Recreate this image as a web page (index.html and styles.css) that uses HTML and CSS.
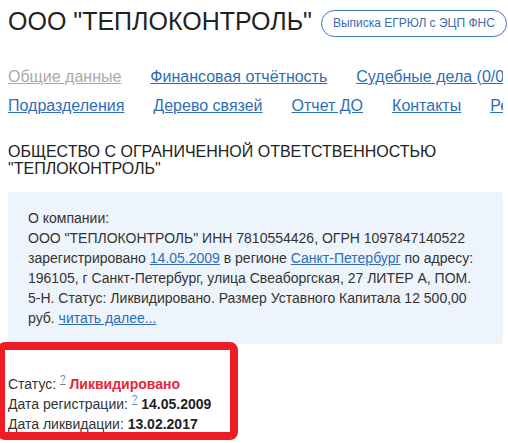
FILE: index.html
```html
<!DOCTYPE html>
<html lang="ru">
<head>
  <meta charset="UTF-8" />
  <meta name="viewport" content="width=device-width, initial-scale=1.0" />
  <title>ООО "ТЕПЛОКОНТРОЛЬ"</title>
  <link rel="stylesheet" href="styles.css">
</head>
<body>
  <div class="page">
    <!-- шапка с названием и кнопкой выписки -->
    <header class="head">
      <h1 class="title">ООО "ТЕПЛОКОНТРОЛЬ"</h1>
      <a href="#" class="pill">Выписка ЕГРЮЛ с ЭЦП ФНС</a>
    </header>

    <nav class="tabs">
      <div class="tabs-row">
        <a href="#" class="tab tab-current">Общие данные</a>
        <a href="#" class="tab">Финансовая отчётность</a>
        <a href="#" class="tab">Судебные дела (0/0)</a>
      </div>
      <div class="tabs-row">
        <a href="#" class="tab">Подразделения</a>
        <a href="#" class="tab">Дерево связей</a>
        <a href="#" class="tab">Отчет ДО</a>
        <a href="#" class="tab">Контакты</a>
        <a href="#" class="tab">Реквизиты</a>
      </div>
    </nav>

    <h2 class="full-name">ОБЩЕСТВО С ОГРАНИЧЕННОЙ ОТВЕТСТВЕННОСТЬЮ "ТЕПЛОКОНТРОЛЬ"</h2>

    <div class="about">
      О компании:<br>
      ООО "ТЕПЛОКОНТРОЛЬ" ИНН 7810554426, ОГРН 1097847140522 зарегистрировано
      <a href="#">14.05.2009</a> в регионе <a href="#">Санкт-Петербург</a> по адресу:
      196105, г Санкт-Петербург, улица Свеаборгская, 27 ЛИТЕР А, ПОМ. 5-Н. Статус:
      Ликвидировано. Размер Уставного Капитала 12&nbsp;500,00 руб. <a href="#">читать далее...</a>
    </div>

    <div class="status">
      <div>Статус: <sup><a href="#" class="hint">?</a></sup> <b class="liquidated">Ликвидировано</b></div>
      <div>Дата регистрации: <sup><a href="#" class="hint">?</a></sup> <b>14.05.2009</b></div>
      <div>Дата ликвидации: <b>13.02.2017</b></div>
      <!-- красная рамка-выделение поверх блока -->
      <span class="mark"></span>
    </div>
  </div>
</body>
</html>
```

FILE: styles.css
```css
:root {
  --link: #2f6db5;
  --text: #333;
  --dark: #222;
  --box-bg: #eef4fb;
  --red: #ee1c25;
}

* {
  box-sizing: border-box;
}

body {
  margin: 0;
  font-family: "Liberation Sans", Arial, sans-serif;
  color: var(--text);
  background: #fff;
}

a {
  color: var(--link);
}

.page {
  padding: 0 5px 12px 8px;
}

/* шапка */
.head {
  display: flex;
  align-items: center;
  margin-top: 7px;
}

.title {
  margin: 0 0 4px;
  font-size: 25px;
  line-height: 28px;
  font-weight: normal;
  color: var(--dark);
  white-space: nowrap;
}

.pill {
  margin-left: 9px;
  height: 27px;
  line-height: 25px;
  padding: 0 11px;
  border: 1px solid #3b78c0;
  border-radius: 14px;
  font-size: 12px;
  color: #3a6db0;
  text-decoration: none;
  white-space: nowrap;
}

/* вкладки */
.tabs {
  margin-top: 23px;
  overflow: hidden;
}

.tabs-row {
  display: flex;
  gap: 29px;
  line-height: 29px;
  font-size: 16px;
  white-space: nowrap;
}

.tab {
  flex-shrink: 0;
  color: var(--link);
}

.tab-current {
  color: #aaa;
}

.full-name {
  margin: 23px 0 0;
  font-size: 16px;
  line-height: 17px;
  font-weight: normal;
  color: var(--dark);
}

.about {
  margin-top: 15px;
  padding: 16px 20px 16px;
  background: var(--box-bg);
  border-radius: 4px;
  font-size: 14px;
  line-height: 20px;
  color: var(--text);
}

.status {
  position: relative;
  margin-top: 30px;
  font-size: 14px;
  line-height: 20px;
  color: var(--text);
}

.status b {
  color: var(--dark);
}

.status b.liquidated {
  color: #e8243c;
}

.hint {
  font-size: 10px;
  color: #6a88aa;
}

.status sup {
  line-height: 0;
}

.mark {
  position: absolute;
  top: -32px;
  left: -11px;
  width: 241px;
  height: 98px;
  border: 8px solid var(--red);
  border-radius: 8px;
  pointer-events: none;
}
```
